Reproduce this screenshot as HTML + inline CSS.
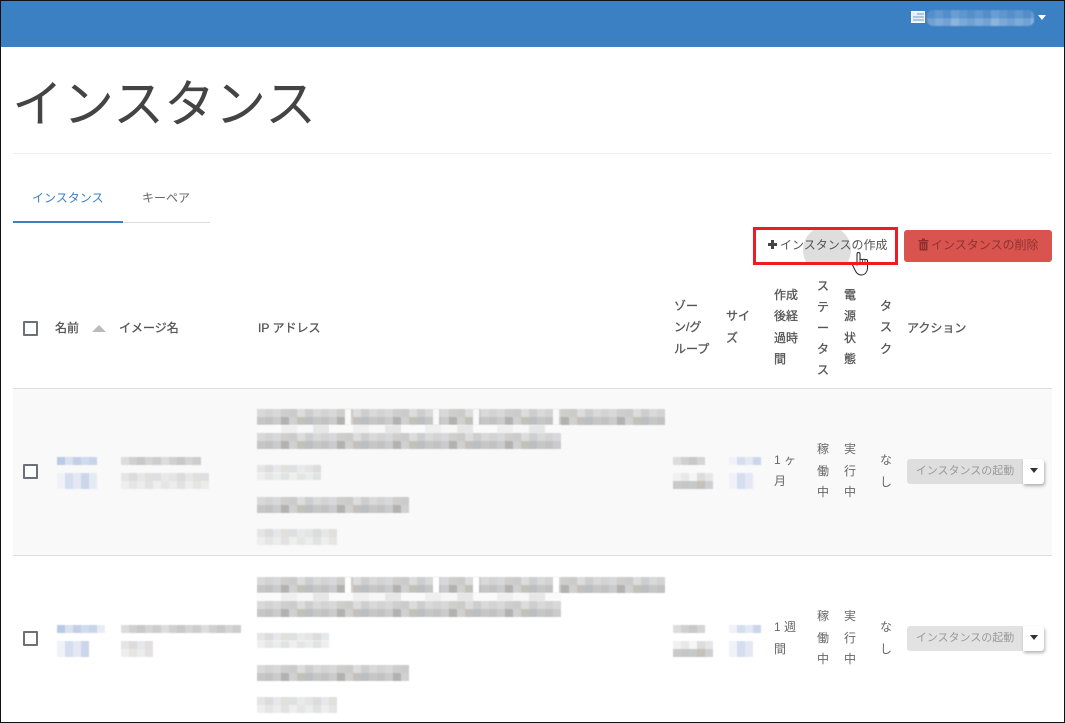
<!DOCTYPE html>
<html lang="ja"><head><meta charset="utf-8"><title>インスタンス</title>
<style>
html,body{margin:0;padding:0;background:#fff}
#p{position:relative;width:1065px;height:723px;overflow:hidden;background:#fff;font-family:"Liberation Sans","Noto Sans CJK JP",sans-serif;font-size:12px;color:#555}
#p div,#p span,#p svg{position:absolute}
.t{white-space:nowrap;line-height:16px}
.h{color:#555;-webkit-text-stroke:.3px #555}
.b{color:#666}
.cb{width:11px;height:11px;border:2px solid #6c7078;background:#fff;border-radius:1px}
.d,.d2,.l,.g,.bl,.bl2,.ls{filter:blur(.5px)}
.d{background-image:repeating-linear-gradient(90deg,#d9d9d9 0 8px,#d3d3d3 8px 16px,#d6d8d9 16px 24px,#d0cdcd 24px 32px,#cbcbcb 32px 40px,#dcdcdc 40px 48px,#cecece 48px 56px),repeating-linear-gradient(90deg,#c6c6c6 0 8px,#c2c2c2 8px 16px,#cbcbcd 16px 24px,#b4b1b1 24px 32px,#d0d0d0 32px 40px,#c4c1bc 40px 48px,#bcbec2 48px 56px);background-size:100% 50%,100% 50%;background-position:0 0,0 100%;background-repeat:no-repeat}
.ls{background:repeating-linear-gradient(90deg,#fafafa 0 24px,#efefef 24px 40px,#f7f7f7 40px 56px,#e6e6e6 56px 72px)}
.d2{background-image:repeating-linear-gradient(90deg,#f1f1f1 0 8px,#e8e8e8 8px 16px,#f5f5f5 16px 24px,#dcdcdc 24px 32px,#e6e6e6 32px 40px),repeating-linear-gradient(90deg,#c9c9c9 0 8px,#c4c7c9 8px 16px,#c8c8c8 16px 24px,#c4c0ba 24px 32px,#ccd0d2 32px 40px,#c6c6c6 40px 48px);background-size:100% 50%,100% 50%;background-position:0 0,0 100%;background-repeat:no-repeat}
.l{background-image:repeating-linear-gradient(90deg,#e5e5e5 0 8px,#dcdcdc 8px 16px,#e6e7e8 16px 24px,#e2e0dd 24px 32px,#dedfe1 32px 40px,#e9e9e9 40px 48px);background-size:100% 50%;background-repeat:no-repeat}
.l::after{content:"";position:absolute;left:0;right:0;top:50%;bottom:0;background:repeating-linear-gradient(90deg,#eeeeee 0 8px,#e6e5e2 8px 16px,#ebecec 16px 24px,#e2e2e2 24px 32px)}
.g{background-image:repeating-linear-gradient(90deg,#dcdcdc 0 8px,#d0d0d0 8px 16px,#c8c8c8 16px 24px,#d4d4d4 24px 32px,#cdcdcd 32px 40px);background-size:100% 100%}
.bl{background-image:repeating-linear-gradient(90deg,#b8cbe4 0 8px,#d9e0ef 8px 16px,#c3cfe6 16px 24px,#cfdcee 24px 32px,#c9d4ea 32px 40px,#e8ecf5 40px 48px)}
.bl2{background-image:repeating-linear-gradient(90deg,#f0f2f8 0 8px,#d5deef 8px 16px,#e3e8f3 16px 24px,#cbd6ea 24px 32px,#e4eaf4 32px 40px)}
.act{background:#dedede;color:#999;width:116px;height:25px;border-radius:3px 0 0 3px;font-size:11px;line-height:24px;text-align:center}
.dd{background:#fff;width:21px;height:25px;border-radius:0 3px 3px 0;box-shadow:1px 2px 3px rgba(0,0,0,.3)}
.ca{width:0;height:0;border-left:4px solid transparent;border-right:4px solid transparent;border-top:5px solid #333}
</style></head><body>
<div id="p">
<div style="left:1px;top:1px;width:1063px;height:46px;background:#3b80c3"></div>
<svg style="left:911px;top:11px" width="15" height="12" viewBox="0 0 15 12"><rect x=".5" y=".5" width="13" height="11" fill="#e8f0f8" stroke="#fff"/><path d="M6 3h7M2 6h11M2 9h11" stroke="#6d9fd0"/></svg>
<div style="left:927px;top:10px;width:107px;height:8px;border-radius:6px 6px 0 0;filter:blur(.7px);background:repeating-linear-gradient(90deg,#558fcb 0 8px,#6298cf 8px 16px,#538dca 16px 24px,#6a9dd2 24px 32px,#5f96ce 32px 40px)"></div>
<div style="left:927px;top:18px;width:107px;height:8px;border-radius:0 0 6px 6px;filter:blur(.7px);background:repeating-linear-gradient(90deg,#70a1d4 0 8px,#7dabd9 8px 16px,#72a2d5 16px 24px,#8cb5de 24px 32px,#7aa8d8 32px 40px)"></div>
<div style="left:1038px;top:15px;width:0;height:0;border-left:4px solid transparent;border-right:4px solid transparent;border-top:5px solid #fff"></div>

<div class="t" style="left:12px;top:67px;font-size:51px;line-height:76px;color:#444">インスタンス</div>
<div style="left:13px;top:153px;width:1039px;height:1px;background:#eee"></div>

<div class="t" style="left:32px;top:190px;color:#3b80c3">インスタンス</div>
<div class="t" style="left:142px;top:190px;color:#666">キーペア</div>
<div style="left:13px;top:222px;width:197px;height:1px;background:#ddd"></div>
<div style="left:13px;top:221px;width:110px;height:2px;background:#3b80c3"></div>

<div style="left:756px;top:230px;width:138px;height:32px;background:#fff;overflow:hidden">
<div style="left:47px;top:-4px;width:48px;height:48px;border-radius:50%;background:#dedede"></div></div>
<div style="left:895px;top:230px;width:2px;height:32px;background:#ddd"></div>
<svg style="left:767px;top:239px" width="11" height="11" viewBox="0 0 11 11"><path d="M4 1h3v3h3v3H7v3H4V7H1V4h3z" fill="#444"/></svg>
<div class="t" style="left:780px;top:237px;color:#555">インスタンスの作成</div>
<div style="left:904px;top:230px;width:148px;height:32px;background:#d9534f;border-radius:3px"></div>
<svg style="left:918px;top:238px" width="11" height="13" viewBox="0 0 11 13"><path d="M.5 2h10v1.500H.5zM4 .5h3V2H4zM1.500 4h8v8.500h-8z" fill="#8e2f2c"/><path d="M3.500 5.500v5.500M5.500 5.500v5.500M7.500 5.500v5.500" stroke="#d9534f" stroke-width=".7"/></svg>
<div class="t" style="left:931px;top:237px;color:#8d3431">インスタンスの削除</div>
<svg style="left:850px;top:250px" width="20" height="27" viewBox="0 0 20 27"><path d="M7 15V4c0-2 3-2 3 0v6c0-1 2.500-1 2.500 0 0-1 2.500-1 2.500 0 0-.8 2.500-.8 2.500.5V18c0 3-2 7-6 7-3 0-5-2-6-4l-3-6c-.8-2 1.500-2.500 2.500-1z" fill="#fff" stroke="#222"/><path d="M10 10v5M12.500 10v5M15 10v5" stroke="#222" stroke-width=".8"/></svg>
<div style="left:753px;top:227px;width:139px;height:32px;border:3px solid #ed1c24"></div>

<!-- header -->
<div class="cb" style="left:23px;top:321px"></div>
<div class="t h" style="left:55px;top:320px">名前</div>
<div style="left:92px;top:325px;width:0;height:0;border-left:7px solid transparent;border-right:7px solid transparent;border-bottom:7px solid #bbb"></div>
<div class="t h" style="left:119px;top:320px">イメージ名</div>
<div class="t h" style="left:258px;top:320px">IP アドレス</div>
<div class="t h" style="left:674px;top:298px">ゾー</div>
<div class="t h" style="left:674px;top:319px">ン/グ</div>
<div class="t h" style="left:674px;top:341px">ループ</div>
<div class="t h" style="left:726px;top:308px">サイ</div>
<div class="t h" style="left:726px;top:330px">ズ</div>
<div class="t h" style="left:774px;top:287px">作成</div>
<div class="t h" style="left:774px;top:308px">後経</div>
<div class="t h" style="left:774px;top:330px">過時</div>
<div class="t h" style="left:774px;top:351px">間</div>
<div class="t h" style="left:817px;top:278px">ス</div>
<div class="t h" style="left:817px;top:299px">テ</div>
<div class="t h" style="left:817px;top:320px">ー</div>
<div class="t h" style="left:817px;top:341px">タ</div>
<div class="t h" style="left:817px;top:362px">ス</div>
<div class="t h" style="left:844px;top:287px">電</div>
<div class="t h" style="left:844px;top:308px">源</div>
<div class="t h" style="left:844px;top:330px">状</div>
<div class="t h" style="left:844px;top:351px">態</div>
<div class="t h" style="left:880px;top:298px">タ</div>
<div class="t h" style="left:880px;top:319px">ス</div>
<div class="t h" style="left:880px;top:341px">ク</div>
<div class="t h" style="left:907px;top:320px">アクション</div>

<div style="left:13px;top:388px;width:1039px;height:167px;background:#f9f9f9"></div>
<div style="left:13px;top:388px;width:1039px;height:1px;background:#ddd"></div>
<div style="left:13px;top:555px;width:1039px;height:1px;background:#ddd"></div>

<!-- row 1 -->
<div class="cb" style="left:23px;top:464px"></div>
<div class="bl" style="left:57px;top:457px;width:40px;height:8px"></div>
<div class="bl2" style="left:57px;top:473px;width:40px;height:16px"></div>
<div class="g" style="left:121px;top:457px;width:80px;height:8px"></div>
<div class="l" style="left:121px;top:473px;width:88px;height:16px"></div>
<div class="d" style="left:257px;top:409px;width:408px;height:16px"></div>
<div style="left:345px;top:409px;width:6px;height:16px;background:#f9f9f9;filter:blur(.5px)"></div>
<div style="left:433px;top:409px;width:6px;height:16px;background:#f9f9f9;filter:blur(.5px)"></div>
<div style="left:473px;top:409px;width:6px;height:16px;background:#f9f9f9;filter:blur(.5px)"></div>
<div style="left:553px;top:409px;width:6px;height:16px;background:#f9f9f9;filter:blur(.5px)"></div>
<div class="ls" style="left:257px;top:425px;width:304px;height:8px"></div>
<div class="d" style="left:257px;top:433px;width:304px;height:16px"></div>
<div class="l" style="left:257px;top:465px;width:64px;height:15px"></div>
<div class="d" style="left:257px;top:497px;width:152px;height:16px"></div>
<div class="l" style="left:257px;top:529px;width:80px;height:16px"></div>
<div class="g" style="left:673px;top:457px;width:32px;height:8px"></div>
<div class="d2" style="left:673px;top:473px;width:40px;height:16px"></div>
<div class="bl2" style="left:729px;top:457px;width:32px;height:8px"></div>
<div class="bl2" style="left:729px;top:473px;width:24px;height:16px"></div>
<div class="t b" style="left:774px;top:452px">1 ヶ</div>
<div class="t b" style="left:774px;top:473px">月</div>
<div class="t b" style="left:817px;top:441px">稼</div>
<div class="t b" style="left:817px;top:463px">働</div>
<div class="t b" style="left:817px;top:484px">中</div>
<div class="t b" style="left:844px;top:441px">実</div>
<div class="t b" style="left:844px;top:463px">行</div>
<div class="t b" style="left:844px;top:484px">中</div>
<div class="t b" style="left:880px;top:452px">な</div>
<div class="t b" style="left:880px;top:474px">し</div>
<div class="act" style="left:907px;top:459px">インスタンスの起動</div>
<div class="dd" style="left:1023px;top:459px"></div>
<div class="ca" style="left:1030px;top:468px"></div>

<!-- row 2 -->
<div class="cb" style="left:23px;top:631px"></div>
<div class="bl" style="left:57px;top:625px;width:48px;height:8px"></div>
<div class="bl2" style="left:57px;top:641px;width:32px;height:16px"></div>
<div class="g" style="left:121px;top:625px;width:120px;height:8px"></div>
<div class="l" style="left:121px;top:641px;width:32px;height:16px"></div>
<div class="d" style="left:257px;top:577px;width:408px;height:16px"></div>
<div style="left:345px;top:577px;width:6px;height:16px;background:#fff;filter:blur(.5px)"></div>
<div style="left:433px;top:577px;width:6px;height:16px;background:#fff;filter:blur(.5px)"></div>
<div style="left:473px;top:577px;width:6px;height:16px;background:#fff;filter:blur(.5px)"></div>
<div style="left:553px;top:577px;width:6px;height:16px;background:#fff;filter:blur(.5px)"></div>
<div class="ls" style="left:257px;top:593px;width:304px;height:8px"></div>
<div class="d" style="left:257px;top:601px;width:304px;height:16px"></div>
<div class="l" style="left:257px;top:633px;width:72px;height:15px"></div>
<div class="d" style="left:257px;top:665px;width:152px;height:16px"></div>
<div class="l" style="left:257px;top:697px;width:80px;height:16px"></div>
<div class="g" style="left:673px;top:625px;width:32px;height:8px"></div>
<div class="d2" style="left:673px;top:641px;width:40px;height:16px"></div>
<div class="bl2" style="left:729px;top:625px;width:32px;height:8px"></div>
<div class="bl2" style="left:729px;top:641px;width:24px;height:16px"></div>
<div class="t b" style="left:774px;top:619px">1 週</div>
<div class="t b" style="left:774px;top:641px">間</div>
<div class="t b" style="left:817px;top:608px">稼</div>
<div class="t b" style="left:817px;top:630px">働</div>
<div class="t b" style="left:817px;top:651px">中</div>
<div class="t b" style="left:844px;top:608px">実</div>
<div class="t b" style="left:844px;top:630px">行</div>
<div class="t b" style="left:844px;top:651px">中</div>
<div class="t b" style="left:880px;top:619px">な</div>
<div class="t b" style="left:880px;top:641px">し</div>
<div class="act" style="left:907px;top:626px;background:#e2e2e2">インスタンスの起動</div>
<div class="dd" style="left:1023px;top:626px"></div>
<div class="ca" style="left:1030px;top:635px"></div>

<!-- frame -->
<div style="left:0;top:0;width:1065px;height:1px;background:#111"></div>
<div style="left:0;top:0;width:1px;height:723px;background:#111"></div>
<div style="left:1064px;top:0;width:1px;height:723px;background:#111"></div>
<div style="left:0;top:722px;width:1065px;height:1px;background:#111"></div>
</div>
</body></html>
